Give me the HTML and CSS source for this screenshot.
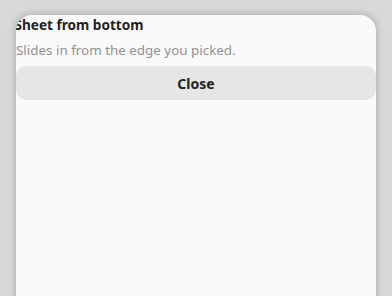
FILE: index.html
```html
<!DOCTYPE html>
<html lang="en">
<head>
    <meta charset="UTF-8">
    <meta name="viewport" content="width=device-width, initial-scale=1.0">
    <title>Sheet</title>
    <link rel="stylesheet" href="styles.css">
</head>
<body>
    <div class="sheet">
        <h2 class="sheet-title">Sheet from bottom</h2>
        <p class="sheet-text">Slides in from the edge you picked.</p>
        <button class="close-button">Close</button>
    </div>
</body>
</html>
```

FILE: styles.css
```css
html, body {
    height: 100%;
}
body {
    font-family: "Noto Sans", sans-serif;
    background-color: #d9d9d9;
    margin: 0;
    padding: 15px 16px 0 16px;
    box-sizing: border-box;
    overflow: hidden;
}
.sheet {
    background: #fafafa;
    border-radius: 16px 16px 0 0;
    box-shadow: 0 0 8px rgba(0, 0, 0, 0.25);
    height: 320px;
    display: flex;
    flex-direction: column;
    overflow: hidden;
}
.sheet-title {
    margin: 0 0 0 -1.5px;
    font-size: 13.6px;
    font-weight: 700;
    color: #222;
    line-height: 20px;
}
.sheet-text {
    margin: 5px 0 0 0;
    font-size: 13.4px;
    color: #919191;
    line-height: 20px;
}
.close-button {
    margin-top: 6px;
    height: 34px;
    border: none;
    border-radius: 10px;
    background: #e6e6e6;
    font-family: "Noto Sans", sans-serif;
    font-size: 14px;
    font-weight: 700;
    color: #222;
    cursor: pointer;
}
```
